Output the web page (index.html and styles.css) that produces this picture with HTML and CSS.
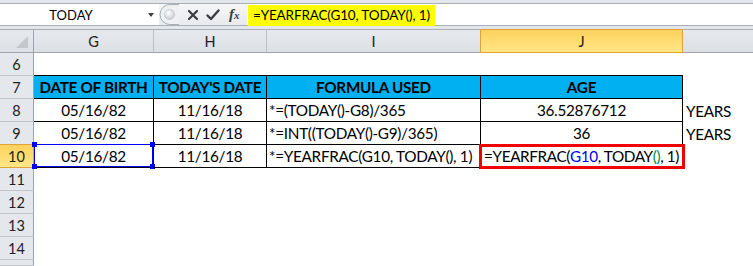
FILE: index.html
```html
<!DOCTYPE html>
<html>
<head>
    <link rel="stylesheet" href="styles.css">
</head>
<body>
    <div class="formula-bar">
        <div class="name-box">
            <span class="name">TODAY</span>
            <span class="arrow"></span>
        </div>
        <div class="fx-tools">
            <svg class="splitter" width="20" height="21" viewBox="0 0 20 21">
                <defs>
                    <radialGradient id="knob" cx="0.4" cy="0.35" r="0.7">
                        <stop offset="0" stop-color="#ffffff"/>
                        <stop offset="1" stop-color="#c4c8cd"/>
                    </radialGradient>
                </defs>
                <path d="M20 0.5 H11 A10 10 0 0 0 11 20.5 H20" fill="#eef0f3" stroke="#a9aeb4"/>
                <circle cx="10.5" cy="10.5" r="5" fill="url(#knob)" stroke="#c9ccd1"/>
            </svg>
            <svg class="tool" width="12" height="12" viewBox="0 0 12 12">
                <path d="M2 2 L10 10 M10 2 L2 10" stroke="#3a3d42" stroke-width="2.2" stroke-linecap="round"/>
            </svg>
            <svg class="tool" width="14" height="12" viewBox="0 0 14 12">
                <path d="M1.5 6.5 L5 10 L12.5 1.5" fill="none" stroke="#3a3d42" stroke-width="2.4" stroke-linecap="round" stroke-linejoin="round"/>
            </svg>
            <span class="fx">f<span class="x">x</span></span>
        </div>
        <div class="formula-input">
            <span class="formula-hl">=YEARFRAC(G10, TODAY(), 1)</span>
        </div>
    </div>

    <div class="sheet">
        <div class="ch corner"><span class="corner-tri"></span></div>
        <div class="ch">G</div>
        <div class="ch">H</div>
        <div class="ch pre">I</div>
        <div class="ch active">J</div>
        <div class="ch last"></div>

        <div class="rh">6</div>
        <div class="c top"></div>
        <div class="c top"></div>
        <div class="c top"></div>
        <div class="c top"></div>
        <div class="c"></div>

        <div class="rh">7</div>
        <div class="c t hd">DATE OF BIRTH</div>
        <div class="c t hd">TODAY'S DATE</div>
        <div class="c t hd">FORMULA USED</div>
        <div class="c t hd">AGE</div>
        <div class="c"></div>

        <div class="rh">8</div>
        <div class="c t mid">05/16/82</div>
        <div class="c t mid">11/16/18</div>
        <div class="c t">*=(TODAY()-G8)/365</div>
        <div class="c t mid">36.52876712</div>
        <div class="c side">YEARS</div>

        <div class="rh pre-row">9</div>
        <div class="c t mid">05/16/82</div>
        <div class="c t mid">11/16/18</div>
        <div class="c t">*=INT((TODAY()-G9)/365)</div>
        <div class="c t mid">36</div>
        <div class="c side">YEARS</div>

        <div class="rh active">10</div>
        <div class="c t mid ref">05/16/82
            <span class="ref-box"></span>
            <span class="handle tl"></span>
            <span class="handle tr"></span>
            <span class="handle bl"></span>
            <span class="handle br"></span>
        </div>
        <div class="c t mid">11/16/18</div>
        <div class="c t">*=YEARFRAC(G10, TODAY(), 1)</div>
        <div class="c t mid edit">=YEARFRAC(<span class="blue">G10</span>, TODAY<span class="green">()</span>, 1)<span class="red-box"></span></div>
        <div class="c"></div>

        <div class="rh">11</div>
        <div class="c"></div><div class="c"></div><div class="c"></div><div class="c"></div><div class="c"></div>
        <div class="rh">12</div>
        <div class="c"></div><div class="c"></div><div class="c"></div><div class="c"></div><div class="c"></div>
        <div class="rh">13</div>
        <div class="c"></div><div class="c"></div><div class="c"></div><div class="c"></div><div class="c"></div>
        <div class="rh">14</div>
        <div class="c"></div><div class="c"></div><div class="c"></div><div class="c"></div><div class="c"></div>
        <div class="rh"></div>
        <div class="c"></div><div class="c"></div><div class="c"></div><div class="c"></div><div class="c"></div>
    </div>
</body>
</html>
```

FILE: styles.css
```css
* {
    box-sizing: border-box;
}
body {
    margin: 0;
    width: 753px;
    height: 266px;
    overflow: hidden;
    background-color: #fff;
    font-family: Lato, "Liberation Sans", sans-serif;
    color: #000;
}

/* formula bar */
.formula-bar {
    display: flex;
    height: 29px;
    padding: 3px 0;
    background-color: #e3e6ea;
}
.name-box, .fx-tools, .formula-input {
    border-top: 1px solid #aab0b7;
    border-bottom: 1px solid #aab0b7;
}
.name-box {
    display: flex;
    align-items: center;
    width: 159px;
    background-color: #fff;
    font-size: 13px;
}
.name {
    flex: 1;
    text-align: center;
    padding-right: 6px;
}
.arrow {
    width: 0;
    height: 0;
    margin-right: 5px;
    border-left: 3.5px solid transparent;
    border-right: 3.5px solid transparent;
    border-top: 4px solid #3c3f44;
}
.fx-tools {
    display: flex;
    align-items: center;
    width: 88px;
    background: linear-gradient(#f5f6f8, #e8eaed);
}
.splitter {
    margin-top: -1px;
}
.tool {
    margin-left: 8px;
}
.tool + .tool {
    margin-left: 7px;
}
.fx {
    margin-left: 9px;
    font-family: "Liberation Serif", serif;
    font-style: italic;
    font-weight: bold;
    font-size: 15px;
    color: #3a3d42;
}
.fx .x {
    font-size: 11px;
}
.formula-input {
    flex: 1;
    padding-left: 1px;
    background-color: #fff;
}
.formula-hl {
    display: inline-block;
    height: 100%;
    padding: 0 5px 0 5px;
    line-height: 21px;
    background-color: #ffff00;
    font-size: 13.5px;
    letter-spacing: -0.15px;
}

/* sheet grid */
.sheet {
    display: grid;
    grid-template-columns: 34px 120px 113px 214px 202px 70px;
    grid-template-rows: 24px repeat(9, 23px) 6px;
}
.ch {
    display: flex;
    align-items: center;
    justify-content: center;
    background: linear-gradient(#e6e9ed, #dcdfe4);
    border-top: 1px solid #a9aeb4;
    border-bottom: 1px solid #9ea3a9;
    border-right: 1px solid #bcc0c5;
    font-size: 14.5px;
    color: #222;
}
.ch.corner {
    justify-content: flex-end;
    align-items: flex-end;
    padding: 0 5px 4px 0;
    border-right-color: #9ea3a9;
}
.corner-tri {
    width: 0;
    height: 0;
    border-left: 12px solid transparent;
    border-bottom: 12px solid #c4c8cd;
}
.ch.pre {
    border-right-color: #e2a23a;
}
.ch.active {
    background: linear-gradient(#fdd15c, #ffe787);
    border-color: #e2a23a;
}
.ch.last {
    border-right: none;
}
.rh {
    display: flex;
    align-items: center;
    justify-content: center;
    background-color: #e4e7eb;
    border-right: 1px solid #9ea3a9;
    border-bottom: 1px solid #c2c6cb;
    font-size: 14.5px;
    color: #222;
}
.rh.pre-row {
    border-bottom-color: #e2a23a;
}
.rh.active {
    background: linear-gradient(#fdd15c, #ffe787);
    border-right-color: #e2a23a;
    border-bottom-color: #e2a23a;
}

.c {
    position: relative;
    display: flex;
    align-items: center;
    padding: 0 2px;
    white-space: nowrap;
    font-size: 15.3px;
    letter-spacing: -0.3px;
}
.c.top {
    border-bottom: 1px solid #000;
}
.c.t {
    border-right: 1px solid #000;
    border-bottom: 1px solid #000;
}
.c.hd {
    justify-content: center;
    background-color: #00b0f0;
    font-weight: bold;
}
.c.mid {
    justify-content: center;
}
.c.side {
    padding-left: 3px;
}

/* reference highlight on G10 */
.ref-box {
    position: absolute;
    left: 0;
    top: -1px;
    right: 0;
    bottom: 0;
    border: 1px solid #0000ff;
}
.handle {
    position: absolute;
    width: 5px;
    height: 5px;
    background-color: #0000ff;
}
.handle.tl { left: -2px; top: -3px; }
.handle.tr { right: -2px; top: -3px; }
.handle.bl { left: -2px; bottom: -2px; }
.handle.br { right: -2px; bottom: -2px; }

/* cell being edited */
.c.edit {
    padding: 0;
    letter-spacing: -0.4px;
}
.blue {
    color: #0000ff;
}
.green {
    color: #008a3e;
}
.red-box {
    position: absolute;
    left: -2px;
    top: -1px;
    right: -3px;
    bottom: -2px;
    border: 3px solid #f00000;
}
```
